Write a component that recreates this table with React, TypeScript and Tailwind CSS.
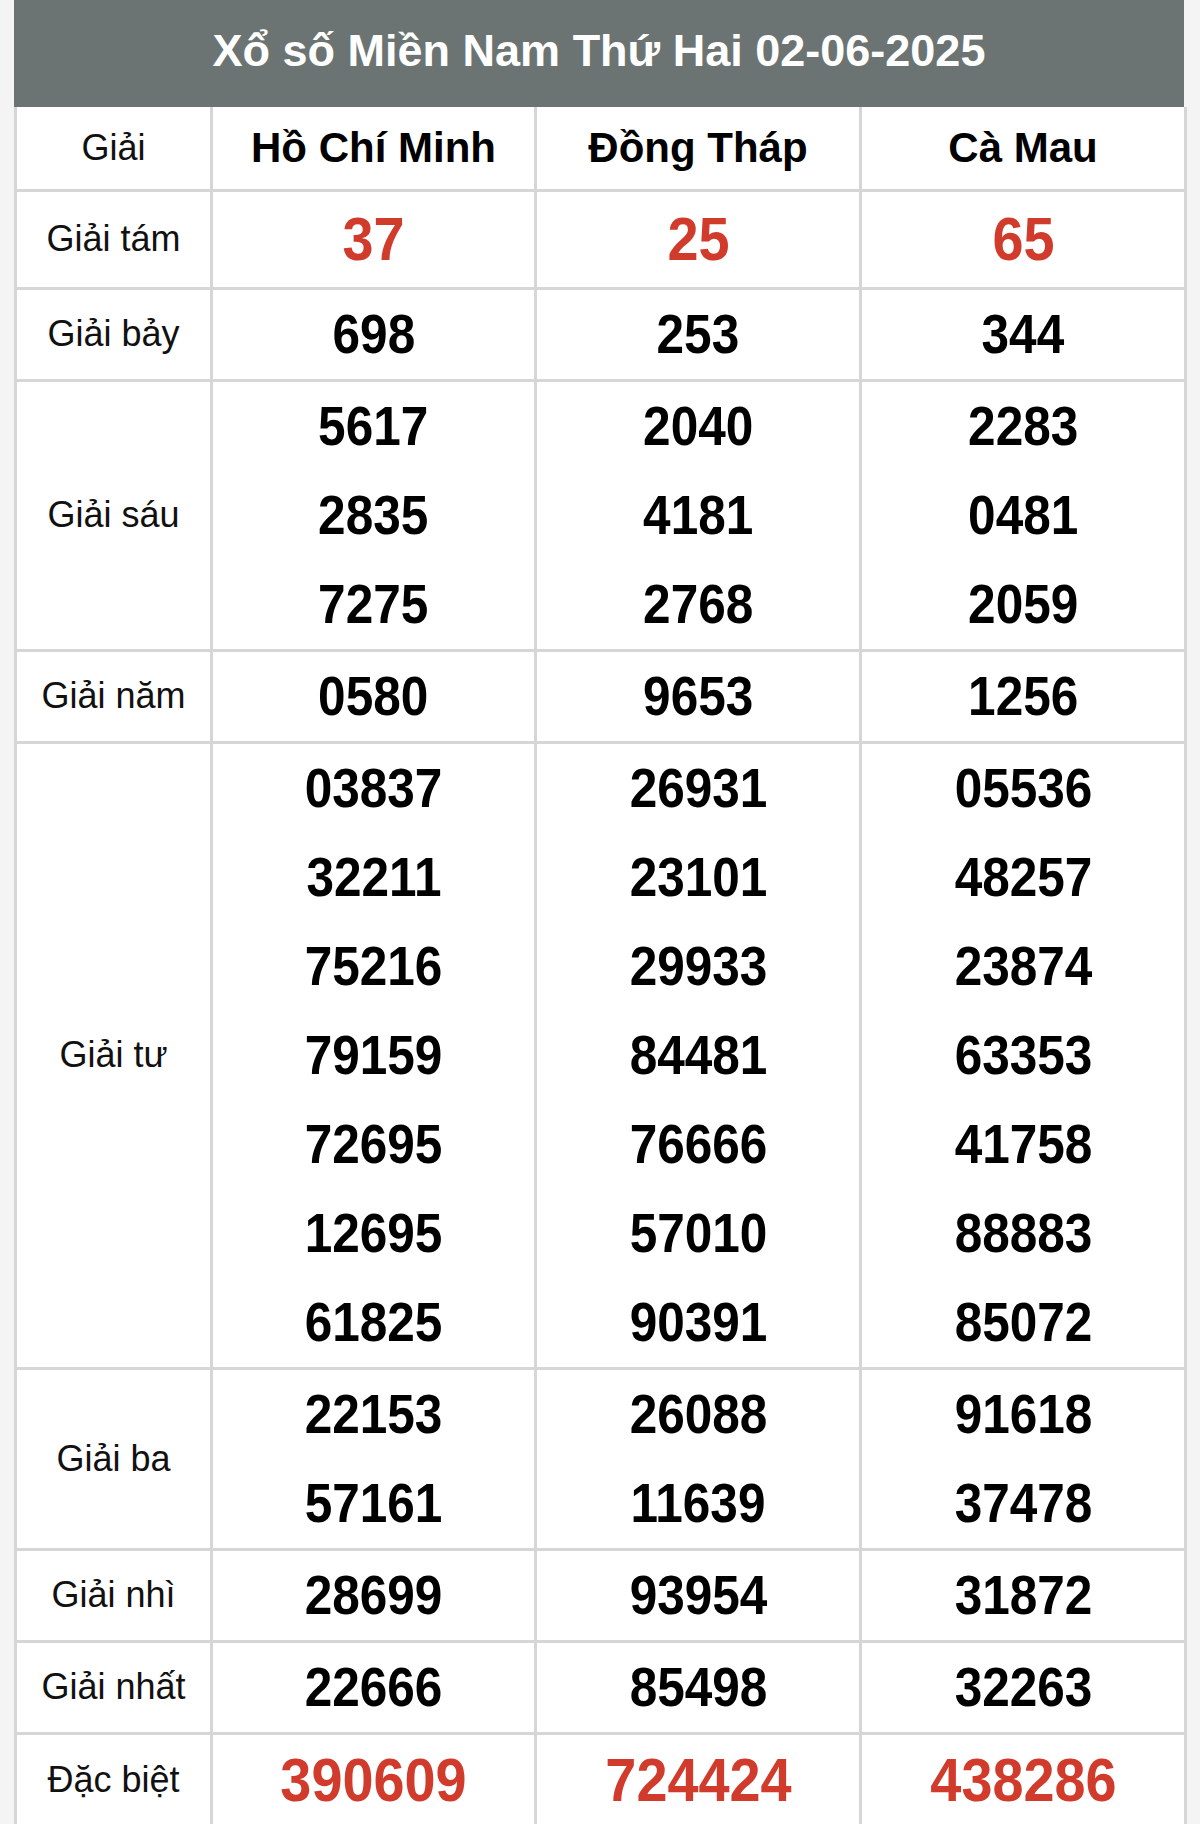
const provinces = ["Hồ Chí Minh", "Đồng Tháp", "Cà Mau"];

type Prize = {
  label: string;
  values: string[][];
  kind?: "small" | "special";
};

const prizes: Prize[] = [
  { label: "Giải tám", values: [["37"], ["25"], ["65"]], kind: "small" },
  { label: "Giải bảy", values: [["698"], ["253"], ["344"]] },
  {
    label: "Giải sáu",
    values: [
      ["5617", "2835", "7275"],
      ["2040", "4181", "2768"],
      ["2283", "0481", "2059"],
    ],
  },
  { label: "Giải năm", values: [["0580"], ["9653"], ["1256"]] },
  {
    label: "Giải tư",
    values: [
      ["03837", "32211", "75216", "79159", "72695", "12695", "61825"],
      ["26931", "23101", "29933", "84481", "76666", "57010", "90391"],
      ["05536", "48257", "23874", "63353", "41758", "88883", "85072"],
    ],
  },
  {
    label: "Giải ba",
    values: [
      ["22153", "57161"],
      ["26088", "11639"],
      ["91618", "37478"],
    ],
  },
  { label: "Giải nhì", values: [["28699"], ["93954"], ["31872"]] },
  { label: "Giải nhất", values: [["22666"], ["85498"], ["32263"]] },
  { label: "Đặc biệt", values: [["390609"], ["724424"], ["438286"]], kind: "special" },
];

function NumberLine({ value, kind }: { value: string; kind?: Prize["kind"] }) {
  if (kind === "small") {
    return (
      <div className="h-[95px] flex items-center justify-center">
        <span className="inline-block scale-x-[0.9] text-[62px] font-bold text-[#d13b2c] leading-none">{value}</span>
      </div>
    );
  }
  if (kind === "special") {
    return (
      <div className="h-[91px] flex items-center justify-center">
        <span className="inline-block scale-x-[0.9] text-[62px] font-bold text-[#d13b2c] leading-none">{value}</span>
      </div>
    );
  }
  return (
    <div className="h-[89px] flex items-center justify-center">
      <span className="inline-block scale-x-[0.9] text-[55px] font-bold text-black leading-none">{value}</span>
    </div>
  );
}

export default function App() {
  return (
    <div
      className="min-h-[1824px] bg-[#f4f4f4] pl-[14px] pr-[16px]"
      style={{ fontFamily: '"Liberation Sans", Arial, sans-serif' }}
    >
      <div className="bg-white">
        {/* Title bar */}
        <div className="h-[107px] bg-[#6c7473] flex items-center justify-center pb-[6px]">
          <h1 className="text-[45px] font-bold text-white">Xổ số Miền Nam Thứ Hai 02-06-2025</h1>
        </div>

        <table className="w-full border-collapse table-fixed">
          <colgroup>
            <col className="w-[196px]" />
            <col className="w-[324px]" />
            <col className="w-[325px]" />
            <col className="w-[325px]" />
          </colgroup>
          <thead>
            <tr>
              <th className="h-[83px] border-[3px] border-t-0 border-[#d6d6d6] text-[36px] font-normal text-[#111]">
                Giải
              </th>
              {provinces.map((p) => (
                <th key={p} className="border-[3px] border-t-0 border-[#d6d6d6] text-[42px] font-bold text-black">
                  {p}
                </th>
              ))}
            </tr>
          </thead>
          <tbody>
            {prizes.map((prize) => (
              <tr key={prize.label}>
                <td className="border-[3px] border-[#d6d6d6] text-center align-middle text-[36px] text-[#111]">
                  {prize.label}
                </td>
                {prize.values.map((col, i) => (
                  <td key={i} className="border-[3px] border-[#d6d6d6] p-0 text-center align-middle">
                    {col.map((v) => (
                      <NumberLine key={v} value={v} kind={prize.kind} />
                    ))}
                  </td>
                ))}
              </tr>
            ))}
          </tbody>
        </table>
      </div>
    </div>
  );
}
